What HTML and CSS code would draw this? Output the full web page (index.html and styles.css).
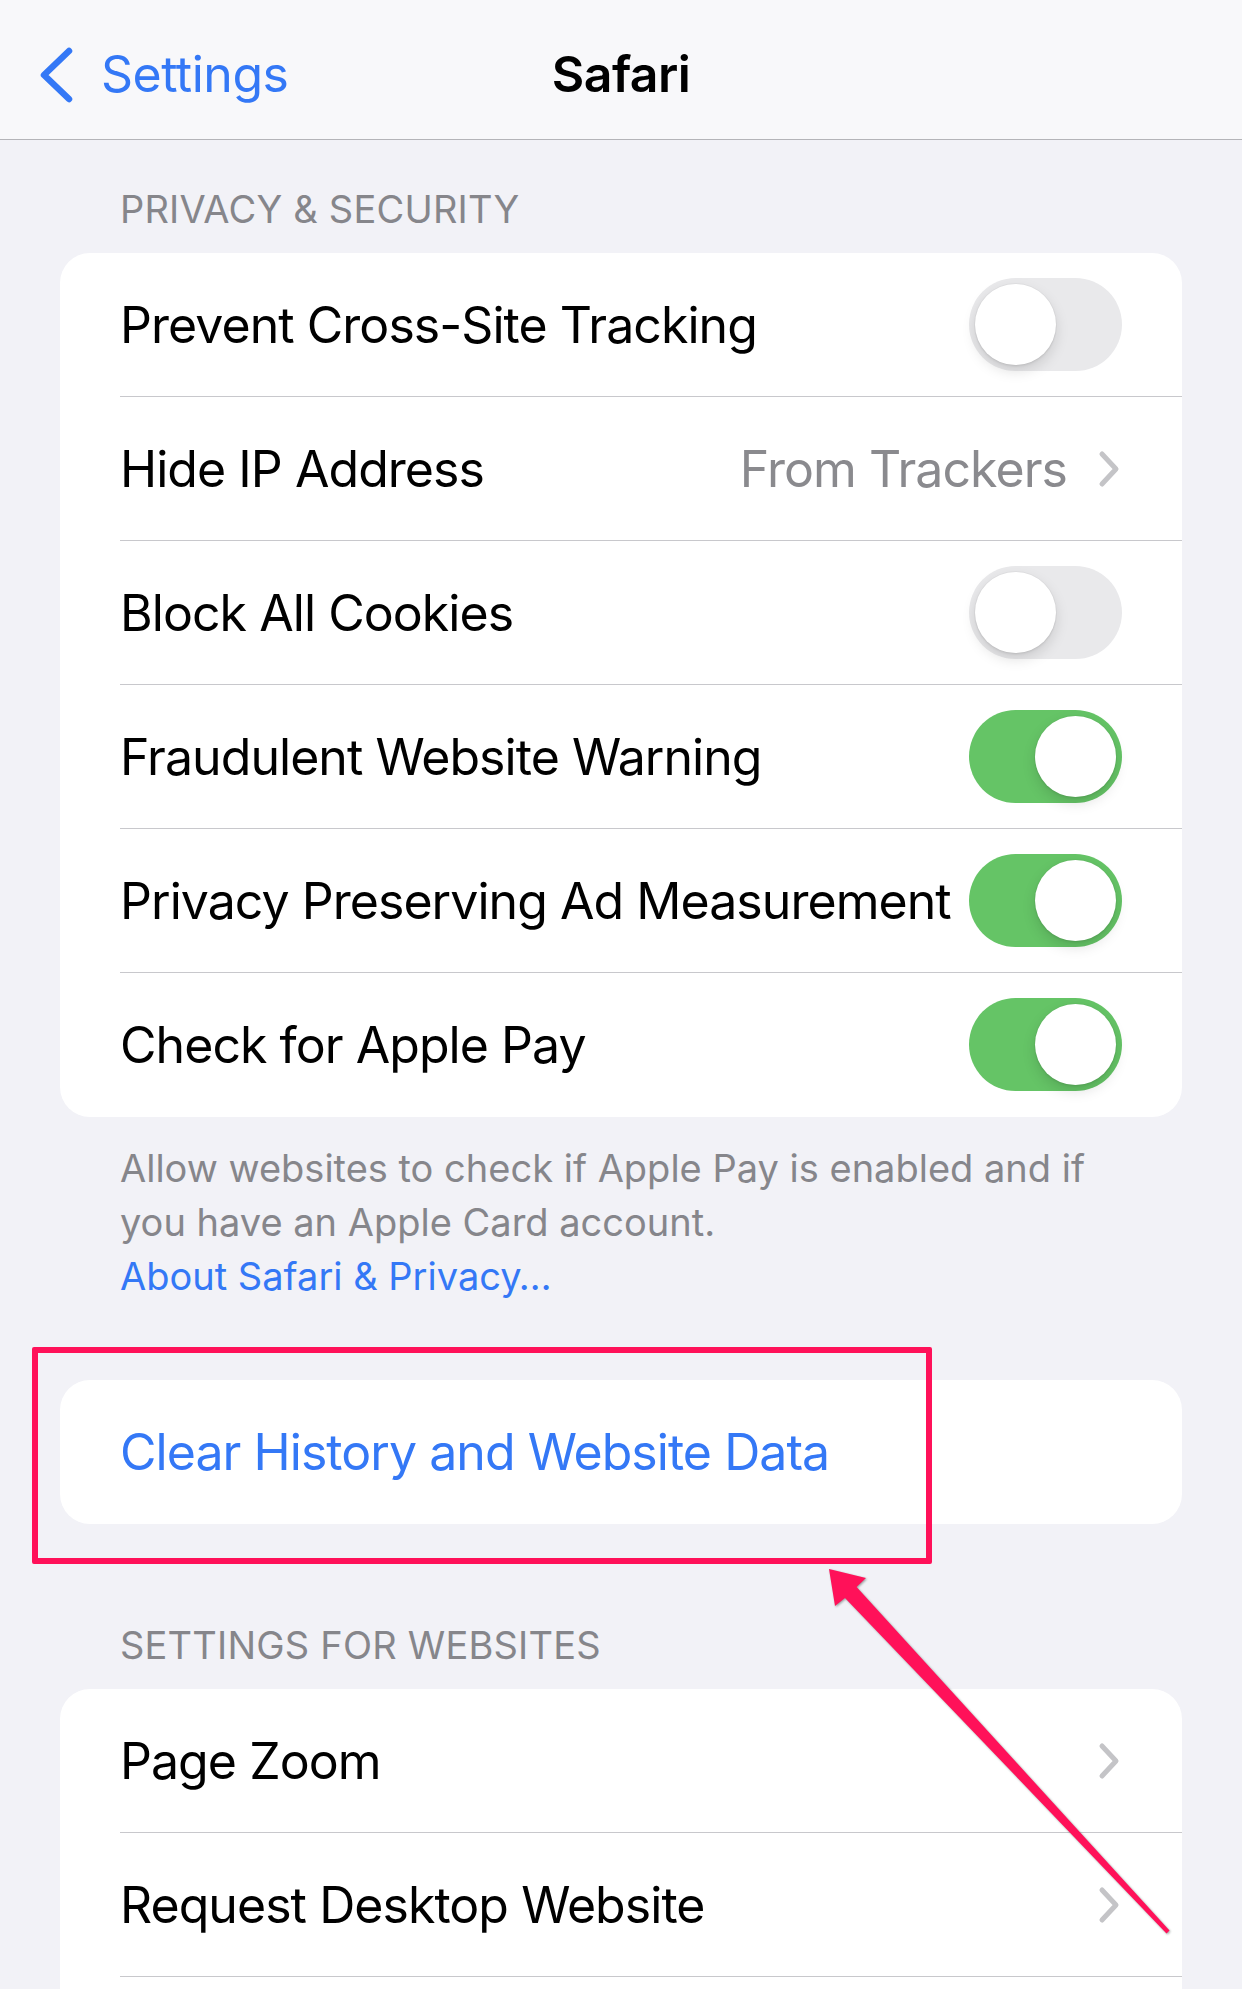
FILE: index.html
```html
<!DOCTYPE html>
<html lang="en">
<head>
<meta charset="utf-8">
<title>Safari Settings</title>
<link rel="stylesheet" href="styles.css">
</head>
<body>
<div class="screen">
  <header class="nav">
    <div class="nav-back">
      <svg class="back-chevron" width="36" height="58" viewBox="0 0 36 58"><polyline points="31,5 6,29 31,53" fill="none" stroke="#3478f6" stroke-width="6.5" stroke-linecap="round" stroke-linejoin="round"/></svg>
      <span class="back-label">Settings</span>
    </div>
    <div class="nav-title">Safari</div>
    <div class="nav-spacer"></div>
  </header>

  <div class="section-header">Privacy &amp; Security</div>
  <div class="card">
    <div class="row"><div class="row-inner"><span class="label">Prevent Cross-Site Tracking</span><span class="switch"><span class="knob"></span></span></div></div>
    <div class="row"><div class="row-inner"><span class="label">Hide IP Address</span><span class="detail">From Trackers</span><svg class="chev" width="24" height="40" viewBox="0 0 24 40"><polyline points="5,5 19,20 5,35" fill="none" stroke="#c4c4c7" stroke-width="5" stroke-linecap="round" stroke-linejoin="round"/></svg></div></div>
    <div class="row"><div class="row-inner"><span class="label">Block All Cookies</span><span class="switch"><span class="knob"></span></span></div></div>
    <div class="row"><div class="row-inner"><span class="label">Fraudulent Website Warning</span><span class="switch on"><span class="knob"></span></span></div></div>
    <div class="row"><div class="row-inner"><span class="label">Privacy Preserving Ad Measurement</span><span class="switch on"><span class="knob"></span></span></div></div>
    <div class="row"><div class="row-inner"><span class="label">Check for Apple Pay</span><span class="switch on"><span class="knob"></span></span></div></div>
  </div>
  <div class="section-footer">Allow websites to check if Apple Pay is enabled and if you have an Apple Card account.<br><span class="link">About Safari &amp; Privacy…</span></div>

  <div class="card card-action">
    <div class="row"><div class="row-inner"><span class="label action">Clear History and Website Data</span></div></div>
  </div>

  <div class="section-header section-header-2">Settings for Websites</div>
  <div class="card">
    <div class="row"><div class="row-inner"><span class="label">Page Zoom</span><svg class="chev" width="24" height="40" viewBox="0 0 24 40"><polyline points="5,5 19,20 5,35" fill="none" stroke="#c4c4c7" stroke-width="5" stroke-linecap="round" stroke-linejoin="round"/></svg></div></div>
    <div class="row"><div class="row-inner"><span class="label">Request Desktop Website</span><svg class="chev" width="24" height="40" viewBox="0 0 24 40"><polyline points="5,5 19,20 5,35" fill="none" stroke="#c4c4c7" stroke-width="5" stroke-linecap="round" stroke-linejoin="round"/></svg></div></div>
    <div class="row"><div class="row-inner"></div></div>
  </div>

  <div class="highlight-box"></div>
  <svg class="arrow" width="1242" height="1989" viewBox="0 0 1242 1989">
    <polygon points="829,1569 866,1578 856.6,1587 1169.5,1930.6 1166.5,1933.4 845,1597.9 835,1606" fill="#ff1159"/>
  </svg>
</div>
</body>
</html>
```

FILE: styles.css
```css
html, body {
  margin: 0;
  padding: 0;
  overflow: hidden;
}
body {
  background: #f2f2f7;
  font-family: "Inter", "Noto Sans", "Liberation Sans", sans-serif;
  color: #000;
  -webkit-font-smoothing: antialiased;
}
.screen {
  position: relative;
  width: 1242px;
  height: 1989px;
  overflow: hidden;
}
.nav {
  height: 140px;
  box-sizing: border-box;
  background: #f8f8fa;
  border-bottom: 1px solid #b4b4b8;
  display: flex;
  align-items: center;
  padding: 9px 38px 0 38px;
}
.nav-back {
  display: flex;
  align-items: center;
  flex: 1;
  flex-basis: 0;
}
.back-chevron {
  flex: none;
  margin-top: 2px;
}
.back-label {
  margin-left: 27px;
  font-size: 50px;
  letter-spacing: -0.5px;
  color: #3478f6;
  line-height: 60px;
}
.nav-title {
  font-size: 50px;
  font-weight: 600;
  letter-spacing: -0.6px;
  line-height: 60px;
  flex: none;
}
.nav-spacer {
  flex: 1;
  flex-basis: 0;
}
.section-header {
  padding: 46px 60px 21px 120px;
  font-size: 38px;
  line-height: 46px;
  text-transform: uppercase;
  color: #86868b;
  letter-spacing: 0.2px;
}
.section-header-2 {
  padding-top: 98px;
}
.card {
  margin: 0 60px;
  background: #fff;
  border-radius: 30px;
  overflow: hidden;
}
.row {
  padding-left: 60px;
  display: flex;
}
.row-inner {
  flex: 1;
  height: 144px;
  box-sizing: border-box;
  display: flex;
  align-items: center;
  padding-right: 60px;
  border-bottom: 1px solid #c8c8cc;
}
.card .row:last-child .row-inner {
  border-bottom-color: transparent;
}
.label {
  flex: 1;
  font-size: 50px;
  letter-spacing: -0.95px;
  line-height: 60px;
  white-space: nowrap;
}
.action {
  color: #3478f6;
}
.detail {
  font-size: 50px;
  letter-spacing: -0.95px;
  line-height: 60px;
  color: #8a8a8e;
  margin-right: 30px;
}
.chev {
  flex: none;
  margin-right: 1px;
}
.switch {
  flex: none;
  width: 153px;
  height: 93px;
  border-radius: 47px;
  background: #e9e9eb;
  box-sizing: border-box;
  padding: 6px;
  display: flex;
  justify-content: flex-start;
}
.switch.on {
  background: #65c466;
  justify-content: flex-end;
}
.knob {
  width: 81px;
  height: 81px;
  border-radius: 50%;
  background: #fff;
  box-shadow: 0 6px 14px rgba(0, 0, 0, 0.13), 0 2px 2px rgba(0, 0, 0, 0.05), 0 0 0 1px rgba(0, 0, 0, 0.03);
}
.section-footer {
  padding: 24px 120px 77px 120px;
  font-size: 38px;
  line-height: 54px;
  color: #86868b;
  letter-spacing: 0px;
}
.link {
  color: #3478f6;
}
.highlight-box {
  position: absolute;
  left: 32px;
  top: 1347px;
  width: 900px;
  height: 217px;
  box-sizing: border-box;
  border: 6px solid #ff1159;
  border-radius: 2px;
}
.arrow {
  position: absolute;
  left: 0;
  top: 0;
  filter: drop-shadow(1px 1px 1px rgba(40, 60, 50, 0.45));
}
```
